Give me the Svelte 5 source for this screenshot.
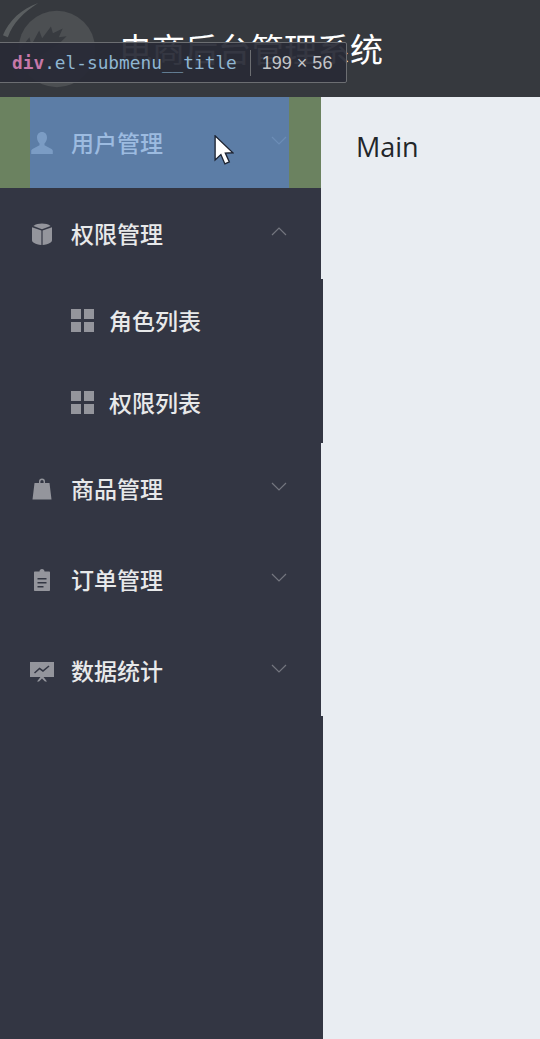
<script>
  const after = [
    { name: "商品管理", icon: "bag" },
    { name: "订单管理", icon: "clip" },
    { name: "数据统计", icon: "chart" },
  ];
  const subs = ["角色列表", "权限列表"];
</script>

{#snippet icon(kind)}
  <svg class="icon" viewBox="0 0 24 24" fill="currentColor">
    {#if kind === "user"}
      <path d="M12 1c-3.200 0-5 2.400-5 5.600 0 2.400 1 4.600 2.500 5.900v1.800L2.500 18c-.9.500-1.300 1.200-1.300 2.300V23h21.600v-2.700c0-1.100-.4-1.800-1.300-2.300l-7-3.700v-1.800c1.500-1.300 2.500-3.500 2.500-5.900C17 3.400 15.200 1 12 1z" />
    {:else if kind === "box"}
      <path d="M12 1.500c3 0 6.500.8 8.600 2.400L12 7.200 3.400 3.900C5.500 2.300 9 1.500 12 1.500z" />
      <path d="M2 5.200l9.400 3.400V23c-2.800-.3-6-1.200-8-2.600-.9-.6-1.400-1.500-1.400-2.500z" />
      <path d="M22 5.200l-9.400 3.400V23c2.800-.3 6-1.200 8-2.600.9-.6 1.400-1.500 1.400-2.500z" />
    {:else if kind === "bag"}
      <path d="M9 6V4.500a3 3 0 0 1 6 0V6h-1.400V4.500a1.600 1.600 0 0 0-3.200 0V6zM4.500 6h15l2 16.500h-19z" />
    {:else if kind === "clip"}
      <path fill-rule="evenodd" d="M9.500 3.500C9.500 2 10.500 1 12 1s2.500 1 2.500 2.500H19c.6 0 1 .4 1 1V22c0 .6-.4 1-1 1H5c-.6 0-1-.4-1-1V4.500c0-.6.4-1 1-1zM7.500 10v1.500h9V10zm0 4v1.500h9V14zm0 4v1.500h6V18z" />
    {:else if kind === "chart"}
      <path fill-rule="evenodd" d="M0 3h24v15H13.500L17 22.500h-2l-3-3-3 3H7l3.500-4.500H0zM4 13.500l1 1 4.500-4 3.500 2.500 6.500-5.500-1-1-5.500 4.500-3.500-2.500z" />
    {/if}
  </svg>
{/snippet}

{#snippet arrow(up)}
  <svg class="arrow" viewBox="0 0 16 9" fill="none" stroke="currentColor" stroke-width="1.200">
    {#if up}
      <path d="M1 8l7-7 7 7" />
    {:else}
      <path d="M1 1l7 7 7-7" />
    {/if}
  </svg>
{/snippet}

<div class="page">
  <header class="top">
    <svg class="logo" viewBox="0 0 100 100">
      <circle cx="58" cy="50" r="39" fill="#4c4f52" />
      <path d="M19 52L30 38l2 8 8-15 3 8 9-12 2 7 10-5-4 9 8-1-8 8-10 6-12 9-8 14-9 12-8-10z" fill="#383b40" />
      <path d="M3 36C9 21 22 9 39 3 25 12 13 23 8 38z" fill="#5a5e60" />
    </svg>
    <span class="title">电商后台管理系统</span>
  </header>

  <div class="body">
    <aside class="side">
      <div class="row hl">
        <div class="row-in">
          <span class="ic">{@render icon("user")}</span>
          <span class="label">用户管理</span>
          <span class="chev">{@render arrow(false)}</span>
        </div>
      </div>
      <div class="row">
        <div class="row-in">
          <span class="ic">{@render icon("box")}</span>
          <span class="label">权限管理</span>
          <span class="chev">{@render arrow(true)}</span>
        </div>
      </div>
      <ul class="sub">
        {#each subs as s}
          <li>
            <span class="grid"><i></i><i></i><i></i><i></i></span>
            <span class="label">{s}</span>
          </li>
        {/each}
      </ul>
      {#each after as item}
        <div class="row">
          <div class="row-in">
            <span class="ic">{@render icon(item.icon)}</span>
            <span class="label">{item.name}</span>
            <span class="chev">{@render arrow(false)}</span>
          </div>
        </div>
      {/each}
      <div class="rest"></div>
    </aside>
    <main class="main">Main</main>
  </div>

  <div class="tip">
    <span class="tag">div</span><span class="cls">.el-submenu__title</span>
    <span class="size">199 × 56</span>
  </div>

  <svg class="cursor" viewBox="0 0 22 36">
    <path d="M1 1v27l6.500-6 4.500 10.500 5-2.200-4.500-10L21 20z" fill="#fff" stroke="#1c2230" stroke-width="1.500" />
  </svg>
</div>

<style>
  :global(body) {
    margin: 0;
    background: #e9edf2;
  }
  .page {
    position: relative;
    width: 540px;
    height: 1039px;
    overflow: hidden;
    display: flex;
    flex-direction: column;
    font-family: "Noto Sans CJK SC", "Liberation Sans", sans-serif;
  }
  .top {
    height: 97px;
    flex: none;
    background: #36393e;
    display: flex;
    align-items: center;
    position: relative;
    overflow: hidden;
  }
  .logo {
    position: absolute;
    left: 0;
    top: 0;
    width: 98px;
    height: 98px;
  }
  .title {
    position: relative;
    margin-left: 119px;
    font-size: 33px;
    color: #fff;
    line-height: 1;
  }
  .body {
    flex: 1;
    display: flex;
    min-height: 0;
  }
  .side {
    position: relative;
    z-index: 1;
    width: 321px;
    flex: none;
    display: flex;
    flex-direction: column;
    background: #333643;
    color: #e8e9ea;
  }
  .row {
    height: 91px;
    flex: none;
  }
  .row-in {
    height: 100%;
    margin: 0 32px 0 30px;
    display: flex;
    align-items: center;
  }
  .hl {
    background: #6b8260;
  }
  .hl .row-in {
    background: #5c7da6;
    color: #9cbbe0;
  }
  .hl .ic {
    color: #7b9cc4;
  }
  .hl .chev {
    color: #6c8db6;
  }
  .ic {
    width: 24px;
    height: 24px;
    margin-right: 17px;
    color: #94959c;
    flex: none;
    display: flex;
  }
  .icon {
    width: 24px;
    height: 24px;
  }
  .label {
    font-size: 23px;
    font-weight: 500;
    line-height: 1;
    flex: 1;
  }
  .chev {
    color: #74767f;
    display: flex;
    margin: -4px 2px 0 0;
  }
  .arrow {
    width: 16px;
    height: 9px;
  }
  .sub {
    list-style: none;
    margin: 0;
    padding: 0;
    width: 323px;
    background: #333643;
  }
  .sub li {
    height: 82px;
    padding-left: 71px;
    display: flex;
    align-items: center;
    gap: 15px;
  }
  .grid {
    width: 23px;
    height: 23px;
    display: grid;
    grid-template-columns: 10px 10px;
    grid-template-rows: 10px 10px;
    gap: 3px;
    flex: none;
  }
  .grid i {
    background: #94959c;
  }
  .rest {
    flex: 1;
    width: 323px;
    background: #333643;
  }
  .main {
    flex: 1;
    background: #e9edf2;
    color: #22262a;
    font-family: "Open Sans", "Liberation Sans", sans-serif;
    font-size: 27px;
    line-height: 36px;
    padding: 32px 0 0 35px;
  }
  .tip {
    position: absolute;
    z-index: 2;
    left: -2px;
    top: 42px;
    width: 349px;
    height: 41px;
    box-sizing: border-box;
    background: rgba(40, 42, 54, 0.94);
    border: 1px solid #6c6e72;
    border-radius: 2px;
    display: flex;
    align-items: center;
    padding-left: 13px;
    font-family: "DejaVu Sans Mono", "Liberation Mono", monospace;
    font-size: 17.800px;
    white-space: nowrap;
  }
  .tag {
    color: #c678a8;
    font-weight: bold;
  }
  .cls {
    color: #8fb6d2;
  }
  .size {
    margin-left: 13px;
    padding-left: 11px;
    border-left: 1px solid #6c6e72;
    color: #c4c5c8;
    font-family: "Liberation Sans", sans-serif;
    font-size: 18px;
    line-height: 26px;
  }
  .cursor {
    position: absolute;
    z-index: 2;
    left: 214px;
    top: 135px;
    width: 20px;
    height: 32px;
  }
</style>
